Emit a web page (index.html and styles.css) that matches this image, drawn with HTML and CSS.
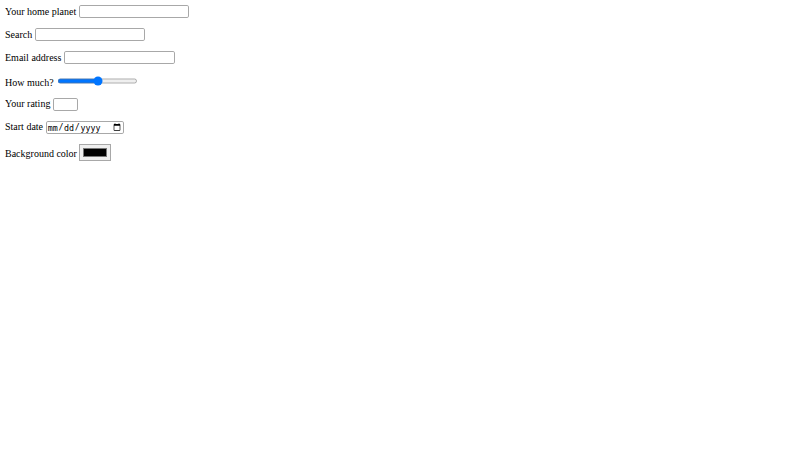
FILE: index.html
```html
<!DOCTYPE html>
<html lang="en">
<head>
<meta charset="utf-8">
<title>Form</title>
<link rel="stylesheet" href="styles.css">
</head>
<body>
<form class="form">
  <div class="row"><label>Your home planet <input class="field" type="text"></label></div>
  <div class="row"><label>Search <input class="field" type="search"></label></div>
  <div class="row"><label>Email address <input class="field" type="email"></label></div>
  <div class="row"><label>How much? <input class="slider" type="range" min="0" max="100" value="50"></label></div>
  <div class="row"><label>Your rating <input class="rating" type="number" min="1" max="5"></label></div>
  <div class="row"><label>Start date <input class="date" type="date"></label></div>
  <div class="row"><label>Background color <input class="swatch" type="color" value="#000000"></label></div>
</form>
</body>
</html>
```
FILE: styles.css
```css
body {
  margin: 5px;
  font-family: "Liberation Serif", "Times New Roman", serif;
  font-size: 10px;
  color: #000;
  background: #fff;
}
.form {
  margin: 0;
}
.row {
  margin: 0 0 10px;
}
input {
  zoom: 0.625;
}
.field,
.rating,
.date {
  box-sizing: border-box;
  border: 1px solid #a8a8a8;
  border-radius: 3px;
}
.field {
  width: 177px;
  height: 21px;
}
.rating {
  width: 40px;
  height: 21px;
}
.date {
  width: 125px;
  height: 21px;
}
.swatch {
  border-color: #a8a8a8;
}
```
